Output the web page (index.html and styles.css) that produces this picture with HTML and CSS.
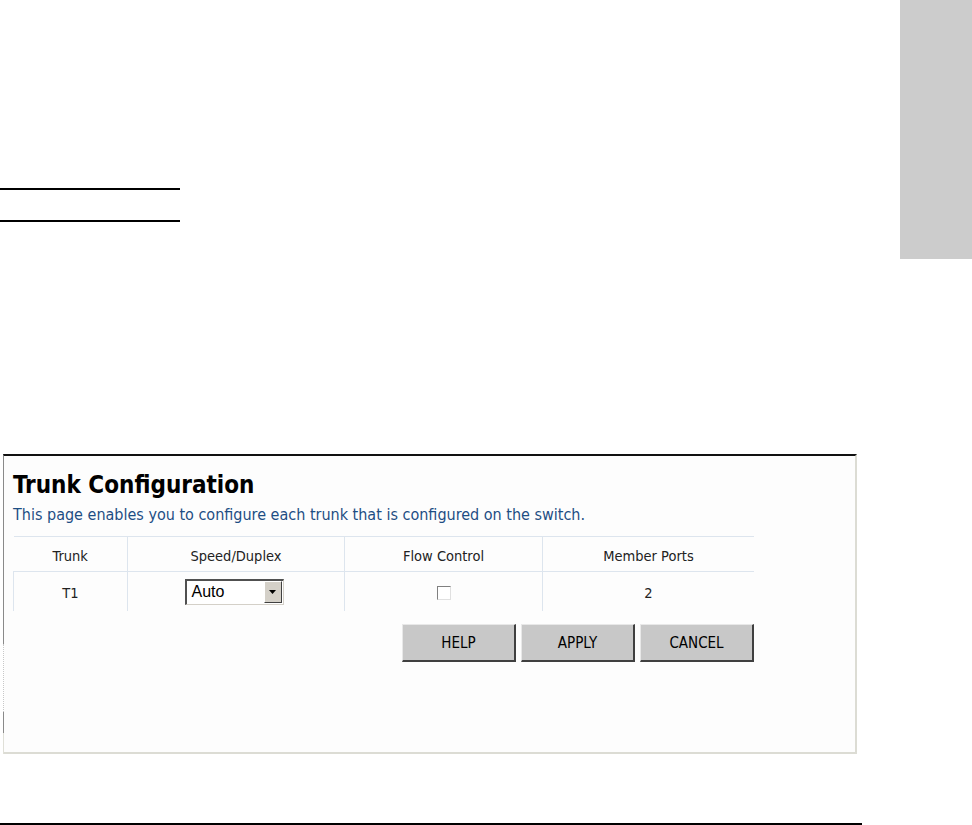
FILE: index.html
```html
<!DOCTYPE html>
<html lang="en">
<head>
    <meta charset="UTF-8">
    <meta name="viewport" content="width=device-width, initial-scale=1.0">
    <title>Trunk Configuration</title>
    <link rel="stylesheet" href="styles.css">
</head>
<body>
    <!-- Page header: rules on the left, chapter tab on the right -->
    <div class="top">
        <div class="rules">
            <div class="rule"></div>
            <div class="rule second"></div>
        </div>
        <div class="tab"></div>
    </div>

    <!-- Screen capture -->
    <div class="panel">
        <h1>Trunk Configuration</h1>
        <p class="desc">This page enables you to configure each trunk that is configured on the switch.</p>

        <table class="trunks">
            <tr>
                <th class="c-trunk">Trunk</th>
                <th class="c-speed">Speed/Duplex</th>
                <th class="c-flow">Flow Control</th>
                <th class="c-ports">Member Ports</th>
            </tr>
            <tr>
                <td class="c-trunk">T1</td>
                <td class="c-speed">
                    <div class="select">
                        <span class="select-text">Auto</span>
                        <span class="select-btn">
                            <svg width="7" height="4" viewBox="0 0 7 4"><path d="M0 0h7L3.5 4z" fill="#000"/></svg>
                        </span>
                    </div>
                </td>
                <td class="c-flow"><span class="checkbox"></span></td>
                <td class="c-ports">2</td>
            </tr>
        </table>

        <div class="buttons">
            <button type="button">HELP</button>
            <button type="button">APPLY</button>
            <button type="button">CANCEL</button>
        </div>
    </div>

    <div class="bottom-rule"></div>
</body>
</html>
```

FILE: styles.css
```css
/* General Page Styles */
body {
    margin: 0;
    padding: 0;
    background: #ffffff;
    font-family: "DejaVu Sans Condensed", "DejaVu Sans", sans-serif;
    color: #222;
}

/* Header area */
.top {
    display: flex;
    justify-content: space-between;
    height: 259px;
}

.rules {
    width: 180px;
    padding-top: 188px;
}

.rule {
    height: 2px;
    background: #000;
}

.rule.second {
    margin-top: 30px;
}

.tab {
    width: 72px;
    background: #cccccc;
}

/* Captured screen */
.panel {
    position: relative;
    box-sizing: border-box;
    width: 854px;
    height: 300px;
    margin: 195px 0 0 3px;
    padding: 15px 0 0 9px;
    background: #fdfdfd;
    border-top: 2px solid #111;
    border-left: 1px solid #8a8a8a;
    border-right: 2px solid #dcdcd4;
    border-bottom: 2px solid #dcdcd4;
}

/* dotted break in the left edge */
.panel::before {
    content: "";
    position: absolute;
    left: -1px;
    top: 188px;
    height: 68px;
    width: 0;
    border-left: 1px dotted #c8c8c8;
    background: #fff;
}

.panel::after {
    content: "";
    position: absolute;
    left: -1px;
    top: 277px;
    height: 21px;
    border-left: 1px solid #e0e0d8;
}

h1 {
    margin: 0;
    font-size: 24px;
    line-height: 28px;
    font-weight: bold;
    color: #000;
}

.desc {
    margin: 7px 0 0;
    font-size: 16px;
    line-height: 18px;
    color: #1d4e84;
}

/* Table */
.trunks {
    margin-top: 12px;
    width: 741px;
    border-collapse: collapse;
    border-top: 1px solid #dde5ee;
    font-size: 14.5px;
}

.trunks th {
    height: 30px;
    padding: 4px 0 0;
    font-weight: normal;
    border-bottom: 1px solid #dde5ee;
}

.trunks td {
    height: 37px;
    padding: 2px 0 0;
}

.trunks th, .trunks td {
    text-align: center;
    vertical-align: middle;
    color: #222;
}

.trunks td.c-trunk {
    border-left: 1px solid #dde5ee;
}

.c-trunk { width: 113px; }
.c-speed { width: 216px; border-left: 1px solid #dde5ee; }
.c-flow { width: 197px; border-left: 1px solid #dde5ee; }
.c-ports { border-left: 1px solid #dde5ee; }

/* Drop-down */
.select {
    display: inline-flex;
    align-items: center;
    box-sizing: border-box;
    width: 99px;
    height: 26px;
    margin: -2px 0 0 -4px;
    vertical-align: middle;
    background: #fff;
    border-top: 2px solid #505050;
    border-left: 2px solid #505050;
    border-right: 1px solid #d4d0c8;
    border-bottom: 1px solid #d4d0c8;
    text-align: left;
}

.select-text {
    flex: 1;
    padding-left: 5px;
    font-family: "Liberation Sans", Arial, sans-serif;
    font-size: 16px;
    color: #000;
}

.select-btn {
    display: flex;
    align-items: center;
    justify-content: center;
    box-sizing: border-box;
    width: 18px;
    height: 22px;
    margin-right: 1px;
    background: #d4d0c8;
    border-top: 1px solid #fff;
    border-left: 1px solid #fff;
    border-right: 1px solid #404040;
    border-bottom: 1px solid #404040;
}

/* Checkbox */
.checkbox {
    display: inline-block;
    box-sizing: border-box;
    width: 14px;
    height: 14px;
    margin-top: -2px;
    vertical-align: middle;
    background: #fff;
    border-top: 1px solid #808080;
    border-left: 1px solid #808080;
    border-right: 1px solid #e0e0e0;
    border-bottom: 1px solid #e0e0e0;
}

/* Buttons */
.buttons {
    display: flex;
    justify-content: flex-end;
    gap: 5px;
    width: 741px;
    margin-top: 13px;
}

.buttons button {
    box-sizing: border-box;
    width: 114px;
    height: 38px;
    padding: 0;
    font-family: "DejaVu Sans Condensed", "DejaVu Sans", sans-serif;
    font-size: 15px;
    color: #000;
    background: #c8c8c8;
    border-top: 1px solid #e8e8e8;
    border-left: 1px solid #e8e8e8;
    border-right: 2px solid #404040;
    border-bottom: 2px solid #404040;
}

.bottom-rule {
    width: 862px;
    height: 2px;
    margin-top: 69px;
    background: #000;
}
```
